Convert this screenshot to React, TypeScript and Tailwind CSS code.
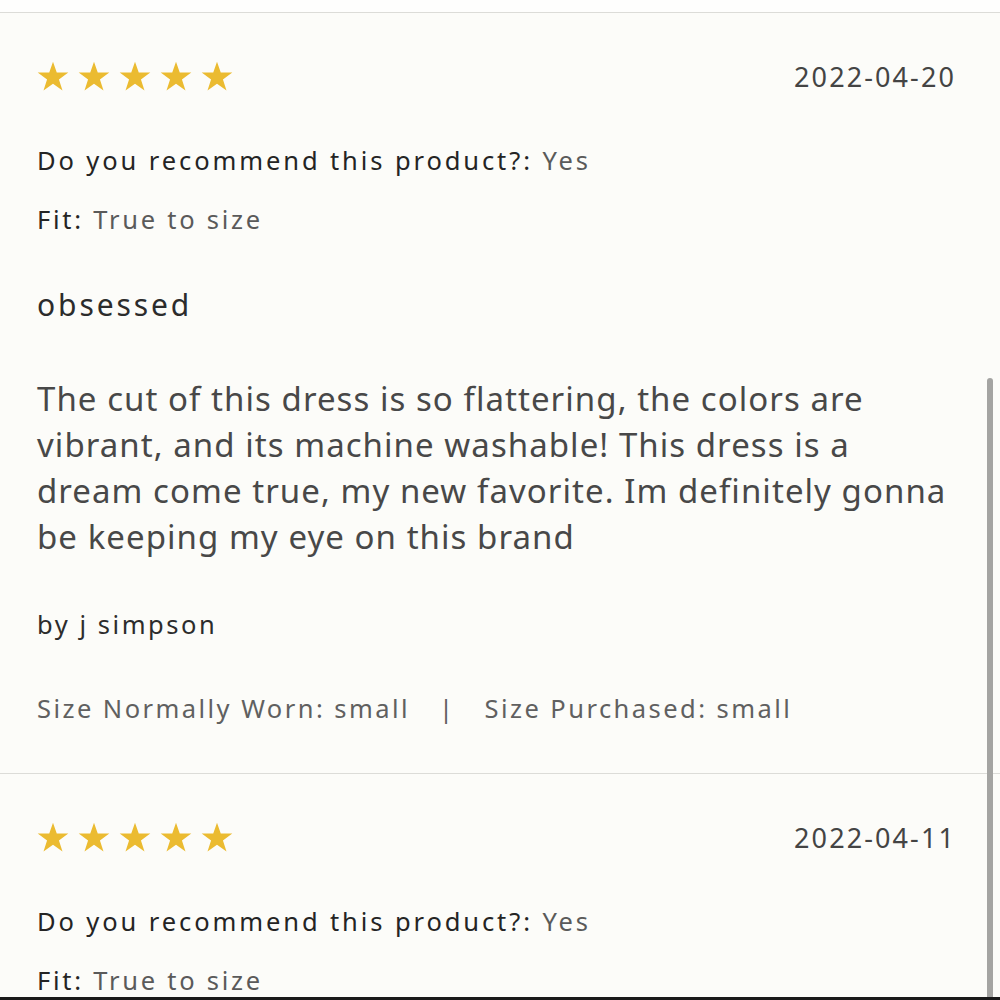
import React from "react";

type Review = {
  date: string;
  recommend: string;
  fit: string;
  title?: string;
  body?: string[];
  author?: string;
  sizeWorn?: string;
  sizePurchased?: string;
};

const reviews: Review[] = [
  {
    date: "2022-04-20",
    recommend: "Yes",
    fit: "True to size",
    title: "obsessed",
    body: [
      "The cut of this dress is so flattering, the colors are",
      "vibrant, and its machine washable! This dress is a",
      "dream come true, my new favorite. Im definitely gonna",
      "be keeping my eye on this brand",
    ],
    author: "j simpson",
    sizeWorn: "small",
    sizePurchased: "small",
  },
  {
    date: "2022-04-11",
    recommend: "Yes",
    fit: "True to size",
  },
];

function Star() {
  return (
    <svg viewBox="0 0 24 24" className="h-[34px] w-[34px]" aria-hidden="true">
      <polygon
        points="12,1.2 14.65,8.9 22.8,8.9 16.2,13.75 18.7,21.6 12,16.8 5.3,21.6 7.8,13.75 1.2,8.9 9.35,8.9"
        fill="#ebbb31"
      />
    </svg>
  );
}

function ReviewCard({ r }: { r: Review }) {
  return (
    <div className="border-t border-[#dcdcd8] pb-[47px] pl-[37px] pr-[44px]">
      <div className="mt-[44px] flex h-[40px] items-center justify-between">
        <div className="-ml-[1px] flex gap-[7px]">
          {[0, 1, 2, 3, 4].map((i) => (
            <Star key={i} />
          ))}
        </div>
        <span className="text-[27px] leading-[40px] tracking-[2.1px] text-[#444]">{r.date}</span>
      </div>
      <p className="mt-[45px] text-[25.5px] leading-[36px] tracking-[2.9px]">
        <span className="text-[#242424]">Do you recommend this product?:</span>{" "}
        <span className="text-[#5a5a5a]">{r.recommend}</span>
      </p>
      <p className="mt-[23px] text-[25.5px] leading-[36px] tracking-[2.75px]">
        <span className="text-[#242424]">Fit:</span>{" "}
        <span className="text-[#5a5a5a]">{r.fit}</span>
      </p>
      {r.title && (
        <h3 className="mt-[48px] text-[30px] leading-[40px] tracking-[2.9px] text-[#2c2c2c]">{r.title}</h3>
      )}
      {r.body && (
        <p className="mt-[51px] whitespace-nowrap text-[33px] leading-[46px] tracking-[1.05px] text-[#484848]">
          {r.body.map((line, i) => (
            <React.Fragment key={i}>
              {line}
              {i < r.body!.length - 1 && <br />}
            </React.Fragment>
          ))}
        </p>
      )}
      {r.author && (
        <p className="mt-[46px] text-[25.5px] leading-[36px] tracking-[2.55px] text-[#2c2c2c]">by {r.author}</p>
      )}
      {r.sizeWorn && (
        <p className="mt-[48px] text-[25.5px] leading-[36px] tracking-[2.45px] text-[#606060]">
          Size Normally Worn: {r.sizeWorn}
          <span className="mx-[29px]">|</span>
          Size Purchased: {r.sizePurchased}
        </p>
      )}
    </div>
  );
}

export default function App() {
  return (
    <div className="relative h-[1000px] w-[1000px] overflow-hidden bg-[#fcfcf9] font-['Noto_Sans','Open_Sans',sans-serif]">
      <div className="h-[12px] bg-[#fefefd]" />
      {reviews.map((r) => (
        <ReviewCard key={r.date} r={r} />
      ))}
      {/* scroll thumb */}
      <div className="absolute right-[7px] top-[378px] h-[640px] w-[6px] rounded-full bg-[#a4a4a2]" />
      {/* bottom edge */}
      <div className="absolute bottom-0 left-0 h-[3px] w-full bg-[#1a1a1a]" />
    </div>
  );
}
